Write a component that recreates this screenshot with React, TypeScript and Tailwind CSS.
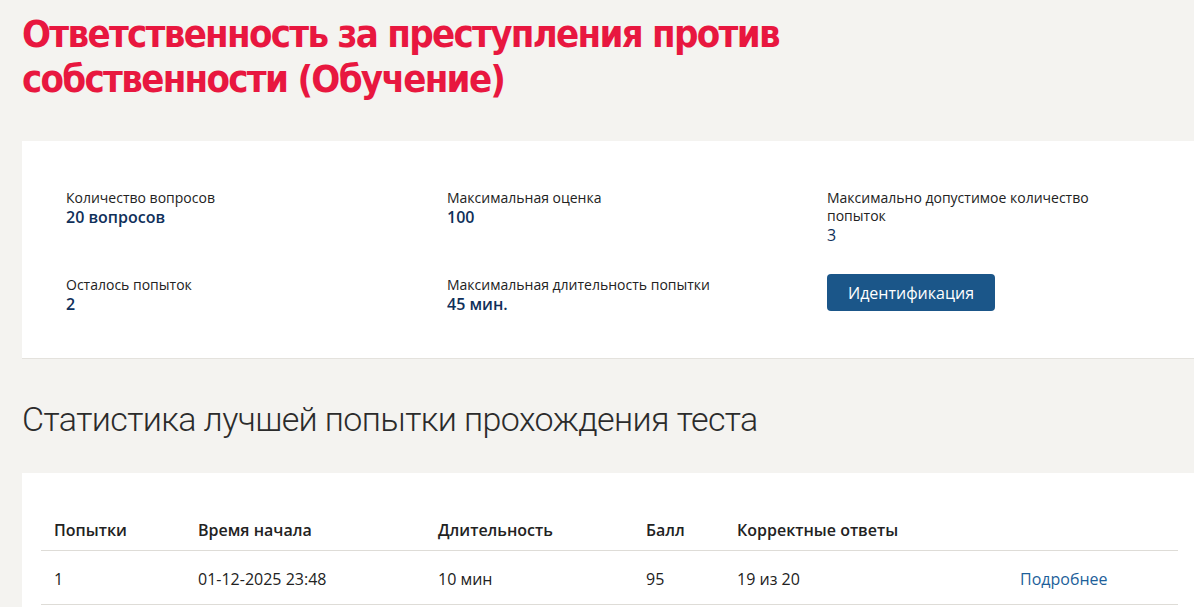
import React from 'react';

// ============================================================================
// DATA
// ============================================================================

const stats = [
    { label: 'Количество вопросов', value: '20 вопросов' },
    { label: 'Максимальная оценка', value: '100' },
    { label: 'Максимально допустимое количество попыток', value: '3', thin: true },
    { label: 'Осталось попыток', value: '2' },
    { label: 'Максимальная длительность попытки', value: '45 мин.' },
];

const attempts = [
    { n: '1', start: '01-12-2025 23:48', duration: '10 мин', score: '95', correct: '19 из 20' },
];

const bodyFont = { fontFamily: '"Open Sans", "Noto Sans", sans-serif' };

// ============================================================================
// STAT ITEM
// ============================================================================

function StatItem({ label, value, thin }: { label: string; value: string; thin?: boolean }) {
    return (
        <div className="w-[285px]">
            <p className="text-[14px] leading-[18px] text-[#222]">{label}</p>
            <p className={`text-[16px] leading-[20px] text-[#10305a] ${thin ? 'font-medium' : 'font-semibold'}`}>
                {value}
            </p>
        </div>
    );
}

export default function App() {
    return (
        <div className="min-h-screen bg-[#f4f3f0] overflow-hidden" style={bodyFont}>
            <div className="pl-[22px]">
                <h1
                    className="pt-[12px] text-[38px] leading-[45px] font-bold text-[#e8173f] tracking-[-1.7px] w-[820px]"
                    style={{ fontFamily: '"DejaVu Sans Condensed", "DejaVu Sans", sans-serif' }}
                >
                    Ответственность за преступления против<br />собственности (Обучение)
                </h1>

                <section className="mt-[39px] w-[1172px] h-[218px] bg-white border-b border-[#e4e2dd] pl-[44px] pt-[48px]">
                    <div className="grid grid-cols-[381px_380px_300px] gap-y-[29px]">
                        <StatItem {...stats[0]} />
                        <StatItem {...stats[1]} />
                        <StatItem {...stats[2]} />
                        <div className="pt-[2px]"><StatItem {...stats[3]} /></div>
                        <div className="pt-[2px]"><StatItem {...stats[4]} /></div>
                        <div>
                            <button className="h-[37px] w-[168px] rounded-[4px] bg-[#1b5689] text-white text-[16px]">
                                Идентификация
                            </button>
                        </div>
                    </div>
                </section>

                <h2
                    className="mt-[40px] text-[34px] leading-[40px] font-light text-[#2b2b2b] tracking-[-0.6px]"
                    style={{ fontFamily: 'Roboto, "Noto Sans", sans-serif' }}
                >
                    Статистика лучшей попытки прохождения теста
                </h2>

                <section className="mt-[34px] w-[1172px] bg-white pl-[19px] pt-[41px] pb-[20px]">
                    <table className="w-[1137px] table-fixed text-[16px] text-[#222] border-collapse">
                        <thead>
                            <tr className="border-b border-[#dedcd7] text-left">
                                <th className="w-[157px] pl-[13px] h-[36px] pb-[4px] font-semibold">Попытки</th>
                                <th className="w-[240px] pb-[4px] font-semibold">Время начала</th>
                                <th className="w-[208px] pb-[4px] font-semibold">Длительность</th>
                                <th className="w-[91px] pb-[4px] font-semibold">Балл</th>
                                <th className="w-[283px] pb-[4px] font-semibold">Корректные ответы</th>
                                <th></th>
                            </tr>
                        </thead>
                        <tbody>
                            {attempts.map((a) => (
                                <tr key={a.n} className="border-b border-[#dedcd7]">
                                    <td className="pl-[13px] h-[54px] pt-[4px]">{a.n}</td>
                                    <td className="pt-[4px]">{a.start}</td>
                                    <td className="pt-[4px]">{a.duration}</td>
                                    <td className="pt-[4px]">{a.score}</td>
                                    <td className="pt-[4px]">{a.correct}</td>
                                    <td className="pt-[4px]"><a className="text-[#1d5f9a]">Подробнее</a></td>
                                </tr>
                            ))}
                        </tbody>
                    </table>
                </section>
            </div>
        </div>
    );
}
